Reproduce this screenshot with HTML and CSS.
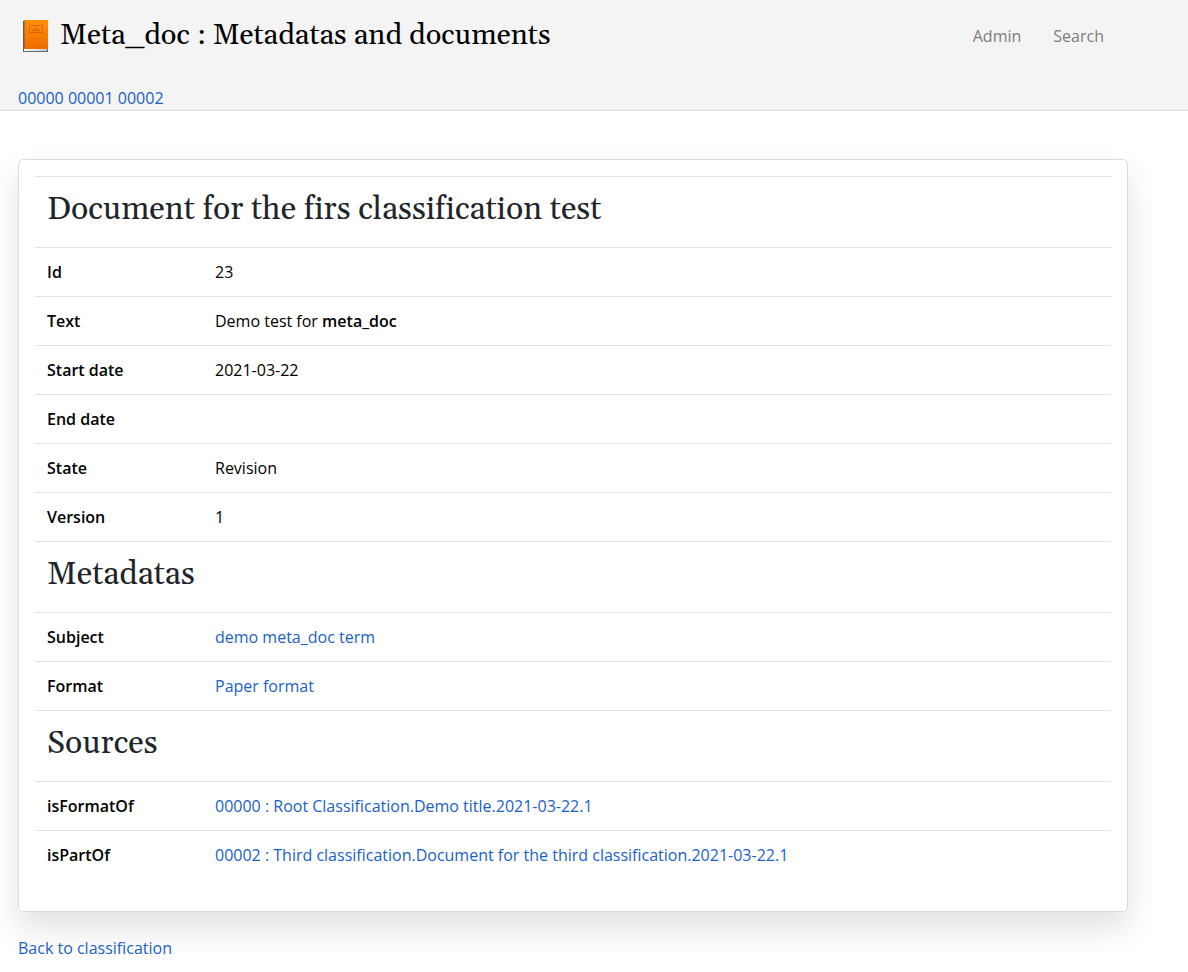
FILE: index.html
```html
<!DOCTYPE html>
<html lang="en">
<head>
<meta charset="utf-8">
<title>Meta_doc : Metadatas and documents</title>
<link rel="stylesheet" href="styles.css">
</head>
<body>
<header class="site-header">
  <div class="topbar">
    <a class="brand" href="#">
      <svg class="logo" viewBox="0 0 26 32" aria-hidden="true">
        <defs>
          <linearGradient id="cover" x1="0" y1="0" x2="0" y2="1">
            <stop offset="0" stop-color="#ff9100"/>
            <stop offset="1" stop-color="#ef6c00"/>
          </linearGradient>
          <linearGradient id="pages" x1="0" y1="0" x2="1" y2="0">
            <stop offset="0" stop-color="#fff"/>
            <stop offset="1" stop-color="#c4c4c4"/>
          </linearGradient>
        </defs>
        <path d="M0 1l2-1v29l-1 2H0z" fill="#5b5e61"/>
        <path d="M1 31V29h23v2z" fill="url(#pages)"/>
        <path d="M0 31h24v-2h1v3H0z" fill="#666"/>
        <path d="M2 0h23v29H1V1z" fill="url(#cover)"/>
        <path d="M1 1v28" fill="none" stroke="#6b5b4c"/>
        <rect x="6.500" y="5.500" width="13" height="7" fill="none" stroke="#dc6500"/>
        <path d="M9 10.500h8M10 10q3-3 6 0" fill="none" stroke="#dc6500"/>
      </svg>
      <span>Meta_doc : Metadatas and documents</span>
    </a>
    <nav class="menu"><a href="#">Admin</a><a href="#">Search</a></nav>
  </div>
  <nav class="classes"><a href="#">00000</a> <a href="#">00001</a> <a href="#">00002</a></nav>
</header>
<main class="content">
  <section class="card">
    <table class="record">
      <colgroup><col class="label-col"><col></colgroup>
      <tbody>
        <tr><th colspan="2"><h2>Document for the firs classification test</h2></th></tr>
        <tr><th>Id</th><td>23</td></tr>
        <tr><th>Text</th><td>Demo test for <b>meta_doc</b></td></tr>
        <tr><th>Start date</th><td>2021-03-22</td></tr>
        <tr><th>End date</th><td></td></tr>
        <tr><th>State</th><td>Revision</td></tr>
        <tr><th>Version</th><td>1</td></tr>
        <tr><th colspan="2"><h2>Metadatas</h2></th></tr>
        <tr><th>Subject</th><td><a href="#">demo meta_doc term</a></td></tr>
        <tr><th>Format</th><td><a href="#">Paper format</a></td></tr>
        <tr><th colspan="2"><h2>Sources</h2></th></tr>
        <tr><th>isFormatOf</th><td><a href="#">00000 : Root Classification.Demo title.2021-03-22.1</a></td></tr>
        <tr><th>isPartOf</th><td><a href="#">00002 : Third classification.Document for the third classification.2021-03-22.1</a></td></tr>
      </tbody>
    </table>
  </section>
  <a href="#">Back to classification</a>
</main>
</body>
</html>
```
FILE: styles.css
```css
* { box-sizing: border-box; }
body { margin: 0; background: #fff; color: #000; font: 16px/24px "Open Sans", "Noto Sans", sans-serif; }
a { color: #1a5fc8; text-decoration: none; }
.site-header { background: #f4f4f4; border-bottom: 1px solid #dedede; }
.topbar { display: flex; justify-content: space-between; align-items: center; height: 72px; padding: 0 84px 0 23px; }
.brand { display: flex; align-items: center; gap: 11px; color: #000; font: 29px/40px Georgia, Gelasio, "DejaVu Serif", serif; font-variant-ligatures: none; }
.logo { width: 26px; height: 32px; }
.menu { display: flex; gap: 32px; }
.menu a { color: #7d7d7d; }
.classes { padding: 14px 18px 0; }
.content { padding: 48px 60px 11px 18px; }
.card { margin-bottom: 24px; padding: 16px 16px 32px; border: 1px solid #dcdcdc; border-radius: 5px; background: #fff; box-shadow: 0 16px 32px rgba(0, 0, 0, .12); }
.record { width: 100%; border-collapse: collapse; table-layout: fixed; }
.label-col { width: 168px; }
.record th, .record td { padding: 12px; border-top: 1px solid #e2e2e2; text-align: left; }
.record th { font-weight: 600; }
.record b { font-weight: 600; }
.record h2 { margin: 0 0 4px; color: #212529; font: 32px/42px Georgia, Gelasio, "DejaVu Serif", serif; font-variant-ligatures: none; }
```
